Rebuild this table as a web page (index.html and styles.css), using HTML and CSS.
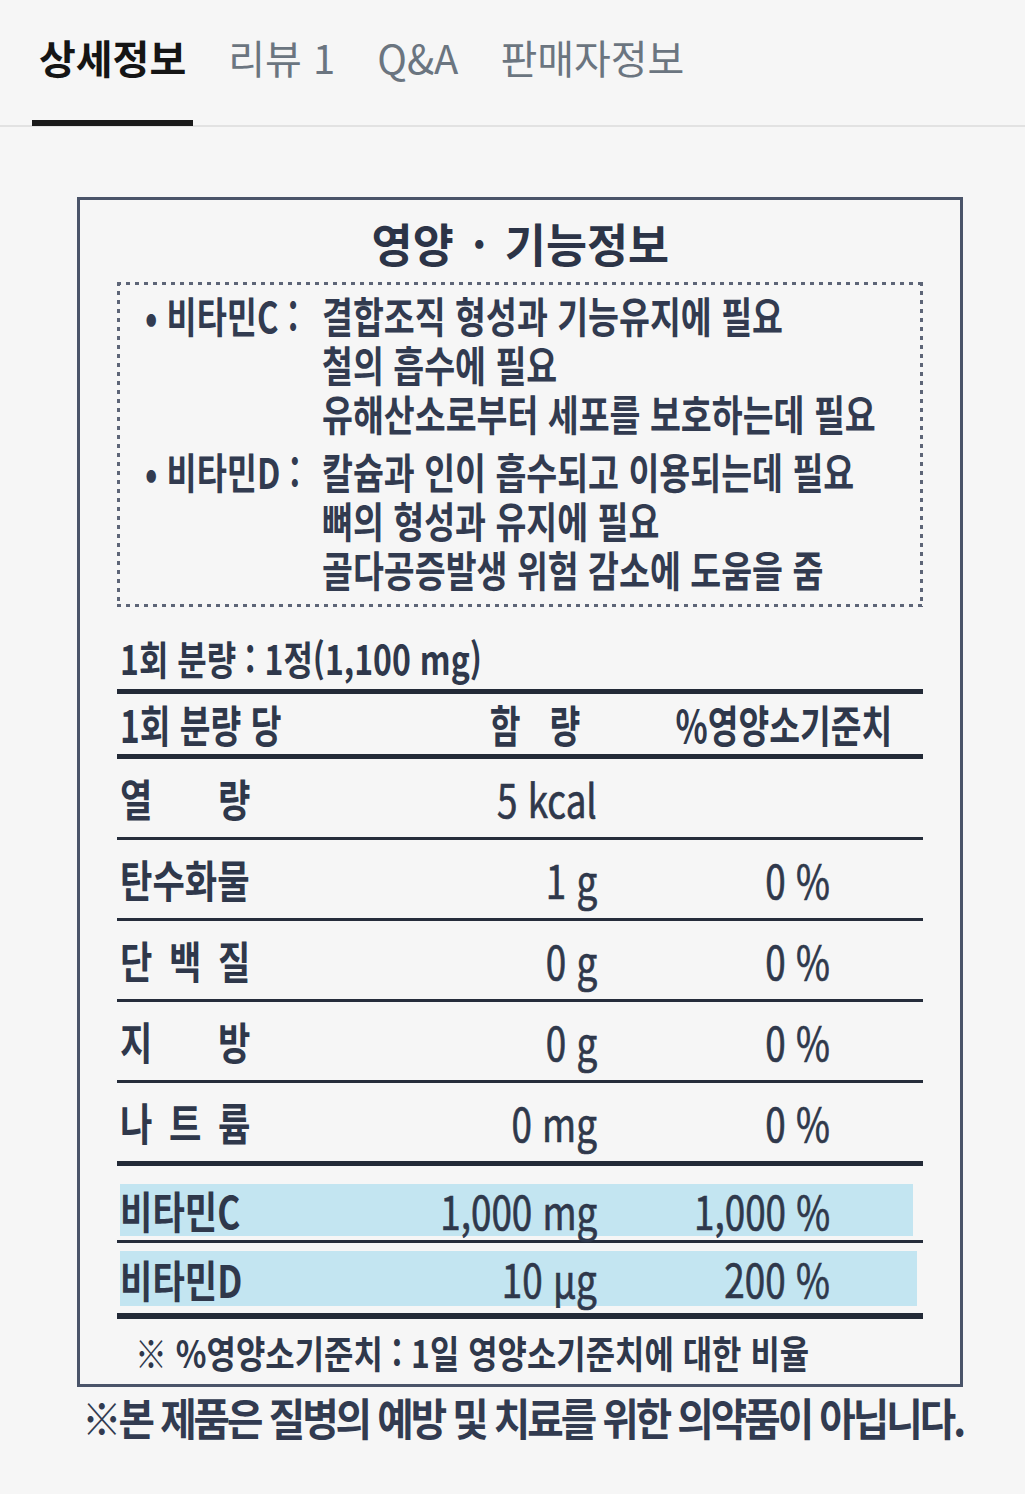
FILE: index.html
```html
<!DOCTYPE html>
<html lang="ko">
<head>
<meta charset="utf-8">
<title>상세정보</title>
<link rel="stylesheet" href="styles.css">
</head>
<body>
<nav class="tabs">
  <a class="tab active">상세정보</a>
  <a class="tab">리뷰 1</a>
  <a class="tab">Q&amp;A</a>
  <a class="tab">판매자정보</a>
</nav>
<main class="content">
  <section class="label">
    <h2 class="label-title"><span class="c m">영양 · 기능정보</span></h2>
    <div class="claims">
      <div class="claim">
        <span class="claim-key"><span class="c">• 비타민C :</span></span>
        <div class="claim-lines">
          <span class="c">결합조직 형성과 기능유지에 필요</span>
          <span class="c">철의 흡수에 필요</span>
          <span class="c">유해산소로부터 세포를 보호하는데 필요</span>
        </div>
      </div>
      <div class="claim second">
        <span class="claim-key"><span class="c">• 비타민D :</span></span>
        <div class="claim-lines">
          <span class="c">칼슘과 인이 흡수되고 이용되는데 필요</span>
          <span class="c">뼈의 형성과 유지에 필요</span>
          <span class="c">골다공증발생 위험 감소에 도움을 줌</span>
        </div>
      </div>
    </div>
    <p class="serving"><span class="c">1회 분량 : 1정(1,100 mg)</span></p>
    <div class="facts">
      <div class="row head">
        <span class="cell name"><span class="c">1회 분량 당</span></span>
        <span class="cell amt"><span class="c r spaced">함 량</span></span>
        <span class="cell dv"><span class="c r">%영양소기준치</span></span>
      </div>
      <div class="row">
        <span class="cell name"><span class="c spread"><span>열</span><span>량</span></span></span>
        <span class="cell amt"><span class="c r num">5 kcal</span></span>
        <span class="cell dv"></span>
      </div>
      <div class="row">
        <span class="cell name"><span class="c">탄수화물</span></span>
        <span class="cell amt"><span class="c r num">1 g</span></span>
        <span class="cell dv"><span class="c r num">0 %</span></span>
      </div>
      <div class="row">
        <span class="cell name"><span class="c spread"><span>단</span><span>백</span><span>질</span></span></span>
        <span class="cell amt"><span class="c r num">0 g</span></span>
        <span class="cell dv"><span class="c r num">0 %</span></span>
      </div>
      <div class="row">
        <span class="cell name"><span class="c spread"><span>지</span><span>방</span></span></span>
        <span class="cell amt"><span class="c r num">0 g</span></span>
        <span class="cell dv"><span class="c r num">0 %</span></span>
      </div>
      <div class="row last">
        <span class="cell name"><span class="c spread"><span>나</span><span>트</span><span>륨</span></span></span>
        <span class="cell amt"><span class="c r num">0 mg</span></span>
        <span class="cell dv"><span class="c r num">0 %</span></span>
      </div>
      <div class="row hl hl-c">
        <div class="band">
          <span class="cell name"><span class="c">비타민C</span></span>
          <span class="cell amt"><span class="c r num">1,000 mg</span></span>
          <span class="cell dv"><span class="c r num">1,000 %</span></span>
        </div>
      </div>
      <div class="row hl hl-d">
        <div class="band">
          <span class="cell name"><span class="c">비타민D</span></span>
          <span class="cell amt"><span class="c r num">10 μg</span></span>
          <span class="cell dv"><span class="c r num">200 %</span></span>
        </div>
      </div>
    </div>
    <p class="note"><span class="c">※ %영양소기준치 : 1일 영양소기준치에 대한 비율</span></p>
  </section>
  <p class="disclaimer"><span class="c m">※본 제품은 질병의 예방 및 치료를 위한 의약품이 아닙니다.</span></p>
</main>
</body>
</html>
```

FILE: styles.css
```css
html, body {
  margin: 0;
  padding: 0;
  background: #f6f6f6;
}

body {
  font-family: "Noto Sans CJK KR", "Noto Sans", sans-serif;
  color: #2f384b;
}

/* ---------- tabs ---------- */
.tabs {
  display: flex;
  gap: 28px;
  padding-left: 32px;
  height: 125px;
  border-bottom: 2px solid #e2e2e2;
}

.tab {
  position: relative;
  padding: 34px 7px 0;
  font-size: 40px;
  line-height: 46px;
  color: #6b7580;
  white-space: nowrap;
}

.tab.active {
  color: #151515;
  font-weight: 700;
}

.tab.active::after {
  content: "";
  position: absolute;
  left: 0;
  right: 0;
  bottom: -1px;
  height: 6px;
  background: #1a1a1a;
}

/* ---------- condensed text (scanned label look) ---------- */
.c {
  display: inline-block;
  white-space: nowrap;
  transform: scaleX(0.8);
  transform-origin: left center;
}

.c.r { transform-origin: right center; }
.c.m { transform-origin: center center; }

/* ---------- label box ---------- */
.content {
  padding-top: 70px;
}

.label {
  box-sizing: border-box;
  width: 886px;
  margin-left: 77px;
  border: 3px solid #4a5469;
  padding: 0 37px;
  font-weight: 700;
}

.label-title {
  margin: 0;
  padding-top: 17px;
  text-align: center;
  font-size: 46px;
  line-height: 50px;
  font-weight: 700;
  color: #2c3447;
}

.label-title .c {
  transform: scaleX(0.97);
  word-spacing: 6px;
}

.claims {
  margin-top: 15px;
  padding: 8px 0 14px 28px;
  background:
    repeating-linear-gradient(90deg, #5d6577 0 4px, transparent 4px 9px) top left / 100% 3px no-repeat,
    repeating-linear-gradient(90deg, #5d6577 0 4px, transparent 4px 9px) bottom left / 100% 3px no-repeat,
    repeating-linear-gradient(180deg, #5d6577 0 4px, transparent 4px 9px) top left / 3px 100% no-repeat,
    repeating-linear-gradient(180deg, #5d6577 0 4px, transparent 4px 9px) top right / 3px 100% no-repeat;
  font-size: 42px;
  line-height: 49px;
  color: #323b50;
}

.claim {
  display: grid;
  grid-template-columns: 177px 1fr;
}

.claim.second {
  margin-top: 9px;
}

.claim-lines {
  display: flex;
  flex-direction: column;
}

.claim-key .c {
  transform: scaleX(0.78);
}

.serving {
  margin: 0;
  padding: 27px 0 7px 3px;
  font-size: 40px;
  line-height: 48px;
  border-bottom: 5px solid #232a37;
}

/* ---------- facts table ---------- */
.facts {
  font-size: 44px;
  line-height: 48px;
}

.row {
  display: grid;
  grid-template-columns: 280px 200px 233px 92px;
  align-items: center;
  height: 78px;
  border-bottom: 3px solid #262d3b;
}

.row.head {
  height: 60px;
  border-bottom-width: 5px;
  border-bottom-color: #232a37;
}

.row.last {
  border-bottom-width: 5px;
  border-bottom-color: #232a37;
}

.cell.name { padding-left: 3px; }
.cell.amt { text-align: right; }
.cell.dv { text-align: right; }

.head .cell.amt { padding-right: 17px; }
.head .cell.dv {
  grid-column: 3 / 5;
  padding-right: 30px;
}

.head .c { transform: scaleX(0.76); }

.spaced { word-spacing: 26px; }

.spread {
  display: inline-flex;
  justify-content: space-between;
  width: 163px;
  transform: scaleX(0.8);
}

.num {
  font-size: 46px;
  font-weight: 400;
  -webkit-text-stroke: 0.7px currentColor;
  transform: scaleX(0.8);
}

.row.hl {
  display: block;
  height: auto;
}

.band {
  display: grid;
  grid-template-columns: 277px 200px 233px 92px;
  align-items: center;
  margin-left: 3px;
  background: #c3e5f1;
}

.hl-c {
  padding: 18px 10px 4px 0;
}

.hl-c .band { height: 52px; }

.hl-d {
  padding: 8px 6px 7px 0;
  border-bottom-width: 6px !important;
  border-bottom-color: #232a37 !important;
}

.hl-d .band { height: 55px; }

.band .cell.name { padding-left: 0; }

.note {
  margin: 0;
  padding: 9px 0 8px 18px;
  font-size: 38px;
  line-height: 48px;
}

.note .c { transform: scaleX(0.84); }

.disclaimer {
  margin: 5px 0 0;
  padding-left: 20px;
  text-align: center;
  font-size: 44px;
  line-height: 50px;
  font-weight: 700;
  color: #323b50;
}

.disclaimer .c {
  letter-spacing: -3.3px;
  transform: scaleX(0.9);
}
```
